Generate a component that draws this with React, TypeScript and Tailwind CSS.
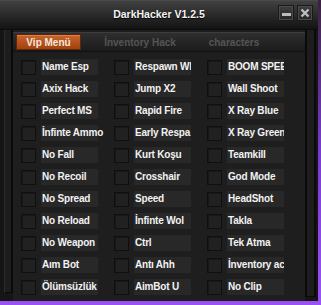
const cols: string[][] = [
  ["Name Esp", "Axix Hack", "Perfect MS", "İnfinte Ammo", "No Fall", "No Recoil", "No Spread", "No Reload", "No Weapon", "Aım Bot", "Ölümsüzlük"],
  ["Respawn Wl", "Jump X2", "Rapid Fire", "Early Respa", "Kurt Koşu", "Crosshair", "Speed", "İnfinte Wol", "Ctrl", "Antı Ahh", "AimBot U"],
  ["BOOM SPEEI", "Wall Shoot", "X Ray Blue", "X Ray Green", "Teamkill", "God Mode", "HeadShot", "Takla", "Tek Atma", "İnventory ac", "No Clip"],
];

// rows are read across, so flatten column lists row by row
const items: { label: string; first: boolean }[] = [];
for (let r = 0; r < 11; r++) {
  for (let c = 0; c < 3; c++) items.push({ label: cols[c][r], first: c === 0 });
}

const Option = ({ label, first }: { label: string; first: boolean }) => (
  <div className="flex items-center gap-[5px] h-[16px]">
    <div className="w-[15px] h-[15px] shrink-0 border border-[#0f0f0f] bg-[#212121] shadow-[inset_1px_1px_0_#181818]" />
    <div
      className={
        first
          ? "w-[57px] h-[16px] bg-[#282828] whitespace-nowrap pl-[1px] text-[10px] leading-[16px] font-bold tracking-[-0.2px] text-[#f2f2f2]"
          : "w-[57px] h-[16px] bg-[#282828] overflow-hidden whitespace-nowrap pl-[1px] text-[10px] leading-[16px] font-bold tracking-[-0.2px] text-[#f2f2f2]"
      }
    >
      {label}
    </div>
  </div>
);

export default function App() {
  return (
    <div className="w-[321px] h-[305px] bg-gradient-to-b from-[#3a2140] via-[#7a3ad0] to-[#9a52f5] font-['Liberation_Sans',sans-serif]">
      <div className="w-[318px] h-[301px] bg-[#151515] flex flex-col">
        {/* Title bar */}
        <div className="h-[29px] shrink-0 grid grid-cols-[1fr_auto_1fr] items-center bg-gradient-to-b from-[#414141] via-[#2a2a2a] to-[#131313] border-t border-[#4a4a4a]">
          <div />
          <div className="text-[10.5px] font-bold text-[#f4f4f4] pb-[1px] [text-shadow:0_1px_1px_#000]">
            DarkHacker V1.2.5
          </div>
          <div className="flex justify-end gap-[3px] pr-[5px] pb-[4px]">
            <div className="w-[16px] h-[16px] flex items-end justify-center pb-[4px] bg-gradient-to-b from-[#3e3e3e] to-[#262626] border border-[#1a1a1a] shadow-[inset_0_0_0_1px_#4a4a4a]">
              <div className="w-[9px] h-[3px] bg-[#bdbdbd]" />
            </div>
            <div className="w-[16px] h-[16px] flex items-center justify-center bg-gradient-to-b from-[#3e3e3e] to-[#262626] border border-[#1a1a1a] shadow-[inset_0_0_0_1px_#4a4a4a]">
              <svg width="10" height="10" viewBox="0 0 10 10">
                <path d="M1.5 1.5 L8.5 8.5 M8.5 1.5 L1.5 8.5" stroke="#bdbdbd" strokeWidth="2.4" />
              </svg>
            </div>
          </div>
        </div>

        {/* Body */}
        <div className="flex-1 flex pl-[4px] pr-[2px] border-t border-[#0c0c0c]">
          <div className="w-[9px] mb-[8px] bg-[#1d1d1d] border-l border-[#2c2c2c] border-r-2 border-r-[#0a0a0a] border-b border-b-[#0a0a0a]" />

          <div className="flex-1 flex flex-col bg-[#1e1e1e] pt-[2px]">
            {/* Tabs */}
            <div className="h-[20px] flex items-center bg-gradient-to-b from-[#2f2f2f] to-[#1b1b1b] border-t border-[#3d3d3d] border-b border-b-[#111]">
              <div className="ml-[3px] w-[65px] h-[16px] flex items-center justify-center bg-gradient-to-b from-[#c9642c] to-[#a2420f] border border-[#5e2608] shadow-[inset_0_1px_0_#d98050] text-[10px] font-bold text-[#f6e9de]">
                Vip Menü
              </div>
              <div className="ml-[13px] w-[92px] text-center text-[10px] font-bold text-[#555555]">
                İnventory Hack
              </div>
              <div className="ml-[2px] w-[92px] text-center text-[10px] font-bold text-[#555555]">
                characters
              </div>
            </div>

            {/* Options */}
            <div className="grid grid-cols-[93px_93px_92px] gap-y-[6px] pl-[8px] pt-[7px]">
              {items.map((it) => (
                <Option key={it.label} label={it.label} first={it.first} />
              ))}
            </div>
          </div>

          <div className="w-[11px] bg-[#1d1d1d] border-l-2 border-[#0a0a0a] border-r-2 border-r-[#0a0a0a] mb-[4px] border-b border-b-[#0a0a0a]" />
        </div>
      </div>
    </div>
  );
}
